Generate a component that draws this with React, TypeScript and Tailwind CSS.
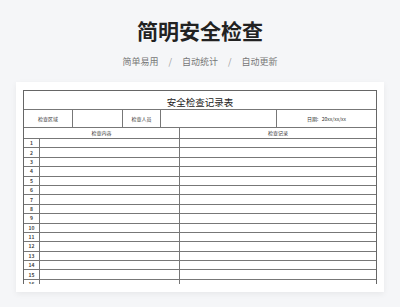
const rows = Array.from({ length: 16 }, (_, i) => i + 1)

export default function App() {
  return (
    <div
      className="w-[400px] h-[307px] overflow-hidden bg-[#f5f6f8] pt-[15px]"
      style={{ fontFamily: '"Noto Sans CJK SC", "Noto Sans", sans-serif' }}
    >
      {/* Heading */}
      <h1 className="text-center text-[21px] leading-[30px] font-bold text-[#222]">简明安全检查</h1>
      <div className="mt-[10px] flex justify-center items-center text-[9px] leading-[14px] text-[#777]">
        <span>简单易用</span>
        <span className="mx-[10px] text-[#999]">/</span>
        <span>自动统计</span>
        <span className="mx-[10px] text-[#999]">/</span>
        <span>自动更新</span>
      </div>

      {/* Sheet card */}
      <div className="mt-[13px] mx-[16px] h-[210px] bg-white px-[7px] pt-[8px] shadow-[0_2px_6px_rgba(0,0,0,0.06)]">
        <div className="h-[194px] overflow-hidden border-x border-t border-[#666] text-[#333]">
          {/* Title row */}
          <div className="h-[19px] border-b border-[#777] flex items-end justify-center pb-[1px]">
            <span className="text-[9.5px] leading-[12px] text-[#222]">安全检查记录表</span>
          </div>

          {/* Info row */}
          <div className="h-[18px] border-b border-[#777] flex text-[5px] leading-[6px]">
            <div className="w-[49px] border-r border-[#777] flex items-center justify-center">检查区域</div>
            <div className="w-[50px] border-r border-[#777]" />
            <div className="w-[38px] border-r border-[#777] flex items-center justify-center">检查人员</div>
            <div className="w-[116px] border-r border-[#777]" />
            <div className="flex-1 flex items-center justify-center">日期:&nbsp;&nbsp;&nbsp;20xx/xx/xx</div>
          </div>

          {/* Header row */}
          <div className="h-[11px] border-b border-[#777] flex text-[5px] leading-[6px]">
            <div className="w-[156px] border-r border-[#777] flex items-center justify-center">检查内容</div>
            <div className="flex-1 flex items-center justify-center">检查记录</div>
          </div>

          {/* Data rows */}
          {rows.map((n) => (
            <div key={n} className="h-[9.4px] border-b border-[#777] flex text-[5px] leading-[6px]">
              <div className="w-[16px] border-r border-[#777] flex items-center justify-center font-bold text-[#444]">{n}</div>
              <div className="w-[140px] border-r border-[#777]" />
              <div className="flex-1" />
            </div>
          ))}
        </div>
      </div>
    </div>
  )
}
